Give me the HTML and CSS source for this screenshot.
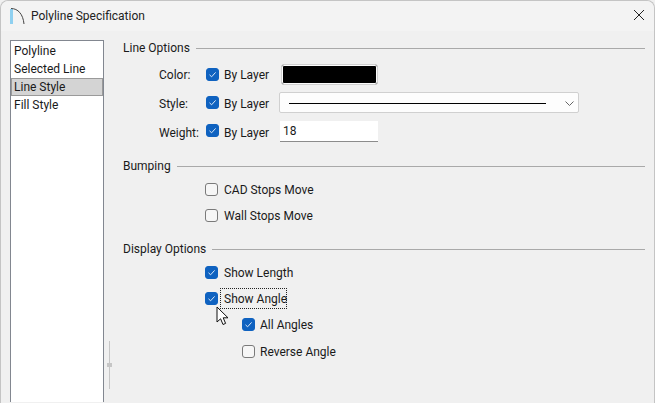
FILE: index.html
```html
<!DOCTYPE html>
<html lang="en">
<head>
    <meta charset="UTF-8">
    <title>Polyline Specification</title>
    <link rel="stylesheet" href="styles.css">
</head>
<body>
    <div class="window">
        <div class="titlebar">
            <svg class="app-icon" width="16" height="18" viewBox="0 0 16 18">
                <path d="M1.5 2v15" stroke="#8fd0f0" stroke-width="3" fill="none"/>
                <path d="M1 1.5C8 1.5 13 7 14 17" stroke="#444" stroke-width="1" fill="none"/>
            </svg>
            <div class="title">Polyline Specification</div>
            <svg class="close" width="10" height="10" viewBox="0 0 10 10">
                <path d="M0 0L10 10M10 0L0 10" stroke="#222" stroke-width="1" fill="none"/>
            </svg>
        </div>
        <div class="content">
            <div class="sidebar">
                <div class="list">
                    <div class="item">Polyline</div>
                    <div class="item">Selected Line</div>
                    <div class="item selected">Line Style</div>
                    <div class="item">Fill Style</div>
                </div>
            </div>
            <div class="main">
                <div class="group-title"><span>Line Options</span><div class="rule"></div></div>
                <div class="field first">
                    <div class="label">Color:</div>
                    <div class="check on"><svg viewBox="0 0 13 13"><path d="M3.5 6.8L5.6 8.8L9.6 4.4"/></svg></div>
                    <div class="by-layer">By Layer</div>
                    <div class="swatch"></div>
                </div>
                <div class="field style-row">
                    <div class="label">Style:</div>
                    <div class="check on"><svg viewBox="0 0 13 13"><path d="M3.5 6.8L5.6 8.8L9.6 4.4"/></svg></div>
                    <div class="by-layer">By Layer</div>
                    <div class="select">
                        <div class="line"></div>
                        <svg class="chevron" width="9" height="5" viewBox="0 0 9 5"><path d="M0.5 0.5L4.5 4.5L8.5 0.5"/></svg>
                    </div>
                </div>
                <div class="field weight-row">
                    <div class="label">Weight:</div>
                    <div class="check on"><svg viewBox="0 0 13 13"><path d="M3.5 6.8L5.6 8.8L9.6 4.4"/></svg></div>
                    <div class="by-layer">By Layer</div>
                    <div class="input">18</div>
                </div>

                <div class="group-title bumping"><span>Bumping</span><div class="rule"></div></div>
                <div class="option level1 gap-first">
                    <div class="check"></div><span>CAD Stops Move</span>
                </div>
                <div class="option level1">
                    <div class="check"></div><span>Wall Stops Move</span>
                </div>

                <div class="group-title display"><span>Display Options</span><div class="rule"></div></div>
                <div class="option level1 gap-display">
                    <div class="check on"><svg viewBox="0 0 13 13"><path d="M3.5 6.8L5.6 8.8L9.6 4.4"/></svg></div><span>Show Length</span>
                </div>
                <div class="option level1 focused">
                    <div class="check on"><svg viewBox="0 0 13 13"><path d="M3.5 6.8L5.6 8.8L9.6 4.4"/></svg></div><span>Show Angle</span>
                </div>
                <div class="option level2">
                    <div class="check on"><svg viewBox="0 0 13 13"><path d="M3.5 6.8L5.6 8.8L9.6 4.4"/></svg></div><span>All Angles</span>
                </div>
                <div class="option level2 last">
                    <div class="check"></div><span>Reverse Angle</span>
                </div>
            </div>
        </div>
        <div class="grip"><div class="grip-dot"></div></div>
        <svg class="cursor" width="14" height="22" viewBox="0 0 14 22">
            <path d="M1 1V16L4.6 12.8L7 18.5L9.6 17.4L7.2 11.8H12Z" fill="#fff" stroke="#111" stroke-width="1" stroke-linejoin="round"/>
        </svg>
    </div>
</body>
</html>
```

FILE: styles.css
```css
html, body {
    height: 100%;
}
* {
    margin: 0;
    padding: 0;
    box-sizing: border-box;
}
body {
    background: #f0f0f0;
    overflow: hidden;
    font-family: Roboto, "Noto Sans", sans-serif;
    font-size: 12px;
    color: #1a1a1a;
}
.window {
    position: relative;
    height: 403px;
    background: #f0f0f0;
    border: 1px solid #c4c4c4;
    border-bottom: 0;
    border-radius: 8px 8px 0 0;
    display: flex;
    flex-direction: column;
}
.titlebar {
    height: 30px;
    background: #f3f3f3;
    border-radius: 8px 8px 0 0;
    display: flex;
    align-items: center;
    padding: 0 10px 0 9px;
}
.app-icon {
    margin-right: 5px;
}
.title {
    flex: 1;
    color: #222;
}
.close {
    margin-bottom: 2px;
}
.content {
    flex: 1;
    display: flex;
    padding: 8px 9px 0 9px;
}
.sidebar {
    width: 94px;
    padding-top: 1px;
}
.list {
    height: 362px;
    background: #fff;
    border: 1px solid #828790;
    border-bottom: 0;
    padding-top: 1px;
}
.item {
    height: 18px;
    line-height: 18px;
    padding-left: 3px;
}
.selected {
    background: #d4d4d4;
    border: 1px solid #9a9a9a;
    line-height: 16px;
    padding-left: 2px;
}
.main {
    flex: 1;
    padding-left: 19px;
}
.group-title {
    display: flex;
    align-items: center;
    height: 18px;
}
.rule {
    flex: 1;
    height: 1px;
    background: #a9a9a9;
    margin-left: 6px;
}
.field {
    display: flex;
    align-items: center;
    height: 21px;
}
.first {
    margin-top: 7px;
}
.style-row {
    margin-top: 7px;
}
.style-row .label, .style-row .by-layer {
    padding-top: 2px;
}
.weight-row {
    margin-top: 8px;
}
.weight-row .check {
    margin-bottom: 2px;
}
.weight-row .label, .weight-row .by-layer {
    padding-top: 2px;
}
.label {
    width: 83px;
    padding-left: 36px;
    white-space: nowrap;
}
.check {
    width: 13px;
    height: 13px;
    border: 1px solid #7a7a7a;
    border-radius: 3px;
    background: #f6f6f6;
    flex-shrink: 0;
    margin-right: 5px;
}
.check.on {
    background: #0f62c0;
    border-color: #0f62c0;
}
.check svg {
    display: block;
    width: 13px;
    height: 13px;
    margin: -1px;
}
.check path {
    fill: none;
    stroke: #dbe9f8;
    stroke-width: 1;
}
.by-layer {
    width: 56px;
    white-space: nowrap;
}
.swatch {
    width: 97px;
    height: 21px;
    margin-left: 1px;
    background: #000;
    border: 1px solid #d0d0d0;
    box-shadow: inset 0 0 0 1px #fcfcfc;
    border-radius: 3px;
}
.select {
    width: 300px;
    height: 21px;
    margin-left: -1px;
    background: #fdfdfd;
    border: 1px solid #d0d0d0;
    border-radius: 2px;
    display: flex;
    align-items: center;
    padding: 1px 4px 0 9px;
}
.line {
    width: 257px;
    height: 1px;
    background: #000;
}
.chevron {
    margin-left: auto;
}
.chevron path {
    fill: none;
    stroke: #666;
}
.input {
    width: 98px;
    height: 21px;
    background: #fff;
    border-bottom: 1px solid #8c8c8c;
    padding-left: 3px;
    line-height: 21px;
}
.bumping {
    margin-top: 15px;
}
.display {
    margin-top: 16px;
}
.option {
    display: flex;
    align-items: center;
    height: 18px;
    margin-top: 8px;
    white-space: nowrap;
}
.option span {
    padding-top: 2px;
}
.gap-first {
    margin-top: 5px;
}
.gap-display {
    margin-top: 5px;
}
.last {
    margin-top: 9px;
}
.level1 {
    padding-left: 82px;
}
.level1 .check {
    margin-right: 6px;
}
.level2 {
    padding-left: 119px;
}
.focused span {
    height: 21px;
    line-height: 22px;
    outline: 1px dotted #222;
    outline-offset: -1px;
    padding: 0 0 0 4px;
    margin-left: -4px;
}
.grip {
    position: absolute;
    left: 108px;
    top: 340px;
    width: 1px;
    height: 48px;
    background: #c6c6c6;
}
.grip-dot {
    position: absolute;
    left: -2px;
    top: 22px;
    width: 5px;
    height: 4px;
    background: #c6c6c6;
}
.cursor {
    position: absolute;
    left: 215px;
    top: 305px;
}
```
